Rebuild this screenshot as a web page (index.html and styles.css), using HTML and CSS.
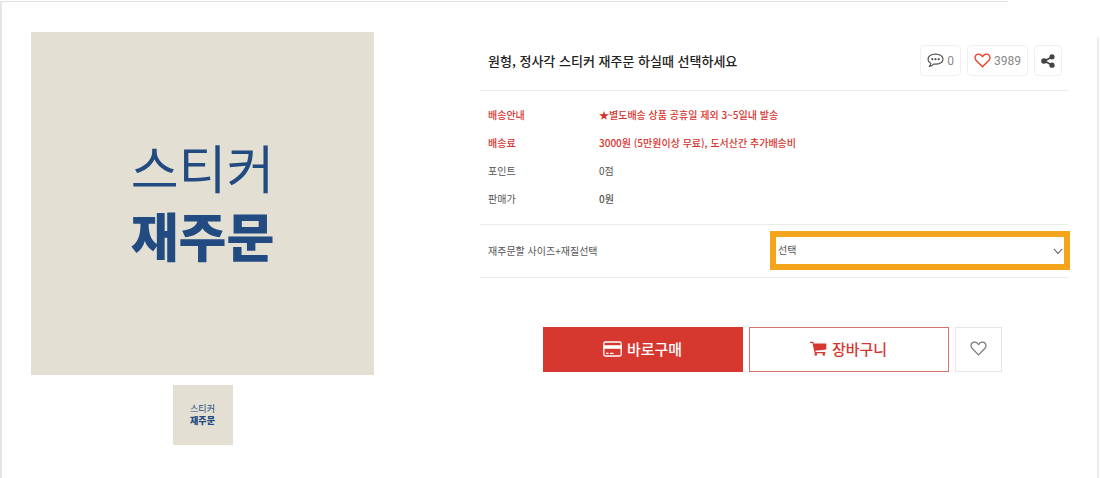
FILE: index.html
```html
<!DOCTYPE html>
<html lang="ko">
<head>
    <meta charset="UTF-8">
    <meta name="viewport" content="width=device-width, initial-scale=1.0">
    <title>스티커 재주문</title>
    <link rel="stylesheet" href="styles.css">
</head>
<body>

    <main class="page">
        <div class="top-rule"></div>

        <div class="product">
            <div class="gallery">
                <div class="photo">
                    <span>스티커</span>
                    <strong>재주문</strong>
                </div>
                <button type="button" class="photo thumb">
                    <span>스티커</span>
                    <strong>재주문</strong>
                </button>
            </div>

            <form class="info">
                <div class="info-head">
                    <h1>원형, 정사각 스티커 재주문 하실때 선택하세요</h1>
                    <div class="badges">
                        <a href="#reviews" class="badge" aria-label="상품평">
                            <svg width="17" height="15" viewBox="0 0 17 15">
                                <path d="M8.500 1.200C4.200 1.200 1 3.300 1 6.200c0 1.700 1.100 3.100 2.800 4-.1 1.200-.7 2.300-1.500 3.100 1.800-.1 3.300-1 4.300-2.200.6.100 1.200.1 1.900.1 4.300 0 7.500-2.100 7.500-5s-3.200-5-7.500-5z" fill="none" stroke="#555" stroke-width="1.200" stroke-linejoin="round"/>
                                <circle cx="5.300" cy="6.200" r="1.100" fill="#555"/>
                                <circle cx="8.500" cy="6.200" r="1.100" fill="#555"/>
                                <circle cx="11.700" cy="6.200" r="1.100" fill="#555"/>
                            </svg>
                            <span>0</span>
                        </a>
                        <button type="button" class="badge" aria-label="좋아요">
                            <svg width="17" height="15" viewBox="0 0 17 15">
                                <path d="M8.500 13.800L2.200 7.500C.6 5.800.7 3.300 2.100 2 3.900.400 6.900.900 8.500 3.700 10.100.900 13.100.400 14.900 2c1.400 1.300 1.500 3.800-.1 5.500z" fill="none" stroke="#e8442e" stroke-width="1.400" stroke-linejoin="round"/>
                            </svg>
                            <span>3989</span>
                        </button>
                        <button type="button" class="badge share" aria-label="공유">
                            <svg width="14" height="14" viewBox="0 0 14 14">
                                <path d="M11 3L3.300 7 11 11" fill="none" stroke="#444" stroke-width="1.800"/>
                                <circle cx="11" cy="2.800" r="2.600" fill="#444"/>
                                <circle cx="3" cy="7" r="2.800" fill="#444"/>
                                <circle cx="11" cy="11.200" r="2.600" fill="#444"/>
                            </svg>
                        </button>
                    </div>
                </div>

                <dl class="details">
                    <dt class="notice">배송안내</dt>
                    <dd class="notice">★별도배송 상품 공휴일 제외 3~5일내 발송</dd>
                    <dt class="notice">배송료</dt>
                    <dd class="notice">3000원 (5만원이상 무료), 도서산간 추가배송비</dd>
                    <dt>포인트</dt>
                    <dd>0점</dd>
                    <dt>판매가</dt>
                    <dd class="price">0원</dd>
                </dl>

                <div class="option">
                    <label for="size">재주문할 사이즈+재질선택</label>
                    <div class="select-box">
                        <select id="size">
                            <option>선택</option>
                        </select>
                        <svg class="chevron" width="10" height="7" viewBox="0 0 10 7">
                            <path d="M1 1l4 4.500L9 1" fill="none" stroke="#555" stroke-width="1.100"/>
                        </svg>
                    </div>
                </div>

                <div class="actions">
                    <button type="submit" class="btn buy">
                        <svg width="19" height="16" viewBox="0 0 19 16">
                            <rect x=".8" y="1" width="17.400" height="14" rx="1.500" fill="none" stroke="#fff" stroke-width="1.300"/>
                            <path d="M1 4.200h17v3.600H1z" fill="#fff"/>
                            <path d="M3 12.300h2.500M7 12.300h3.500" stroke="#fff" stroke-width="1.200"/>
                        </svg>
                        바로구매
                    </button>
                    <button type="button" class="btn cart">
                        <svg width="17" height="15" viewBox="0 0 17 15">
                            <path d="M0 .8h3.300l.4 1.600H16.300v6L5.400 9.700l.3 1.300h9.500v1.200H4.700L2.400 2H0z" fill="#d63830"/>
                            <circle cx="5.800" cy="13.400" r="1.300" fill="#d63830"/>
                            <circle cx="13.800" cy="13.400" r="1.300" fill="#d63830"/>
                        </svg>
                        장바구니
                    </button>
                    <button type="button" class="btn wish" aria-label="찜하기">
                        <svg width="17" height="15" viewBox="0 0 17 15">
                            <path d="M8.500 13.800L2.200 7.500C.6 5.800.7 3.300 2.100 2 3.900.400 6.900.900 8.500 3.700 10.100.900 13.100.400 14.900 2c1.400 1.300 1.500 3.800-.1 5.500z" fill="none" stroke="#777" stroke-width="1.200" stroke-linejoin="round"/>
                        </svg>
                    </button>
                </div>
            </form>
        </div>
    </main>

</body>
</html>
```
FILE: styles.css
```css
* {
    box-sizing: border-box;
}

body {
    margin: 0;
    padding: 1px 1px 0 0;
    background: #fff;
    color: #555;
    font-family: "Noto Sans CJK KR", sans-serif;
    font-size: 10px;
}

button,
select {
    font-family: inherit;
    color: inherit;
}

button {
    cursor: pointer;
}

svg {
    flex: none;
}

.page {
    min-height: calc(100vh - 1px);
    display: flex;
    flex-direction: column;
    border-left: 2px solid #e6e6e6;
}

.top-rule {
    height: 1px;
    margin-right: 91px;
    background: #e0e0e0;
}

.product {
    flex: 1;
    display: flex;
    gap: 106px;
    padding-left: 29px;
}

/* gallery */
.gallery {
    flex: 0 1 343px;
    display: flex;
    flex-direction: column;
    align-items: center;
    gap: 10px;
    padding: 30px 0;
}

.photo {
    width: 100%;
    aspect-ratio: 1;
    display: flex;
    flex-direction: column;
    align-items: center;
    justify-content: center;
    padding-bottom: 6px;
    background: #e3dfd3;
    color: #224b82;
    font-size: 52px;
    font-weight: 400;
    line-height: 68px;
}

.photo strong {
    font-weight: 900;
}

.thumb {
    width: 60px;
    padding: 0;
    border: none;
    font-size: 9px;
    line-height: 12px;
}

/* product info */
.info {
    flex: 1;
    margin-top: 35px;
    padding-right: 29px;
    border-right: 2px solid #ececec;
}

.info-head {
    display: flex;
    align-items: center;
    justify-content: space-between;
    padding: 8px 6px 14px 8px;
    border-bottom: 1px solid #ececec;
}

h1 {
    margin: 0;
    color: #222;
    font-size: 13px;
    font-weight: 500;
    line-height: 20px;
}

.badges {
    display: flex;
    gap: 6px;
}

.badge {
    height: 31px;
    display: flex;
    align-items: center;
    gap: 3px;
    padding: 0 6px;
    background: #fff;
    border: 1px solid #f0f0f0;
    border-radius: 4px;
    color: #888;
    font-family: Roboto, sans-serif;
    font-size: 12px;
    text-decoration: none;
}

.details {
    display: grid;
    grid-template-columns: 111px 1fr;
    margin: 0;
    padding: 10px 8px 11px;
    border-bottom: 1px solid #ececec;
    line-height: 28px;
}

.details dd {
    margin: 0;
}

.details .notice {
    color: #d8322c;
    font-weight: 500;
}

.details .price {
    font-weight: 500;
}

.option {
    display: flex;
    align-items: center;
    justify-content: space-between;
    padding: 6px 0 7px 8px;
    border-bottom: 1px solid #ececec;
}

.select-box {
    position: relative;
    flex: 0 1 300px;
    margin-right: -2px;
}

.select-box select {
    display: block;
    width: 100%;
    height: 39px;
    padding: 0 20px 2px 2px;
    appearance: none;
    background: #fff;
    border: 6px solid #f4a51c;
    border-radius: 0;
    font-size: 10px;
}

.chevron {
    position: absolute;
    top: 17px;
    right: 7px;
    pointer-events: none;
}

.actions {
    display: flex;
    justify-content: center;
    gap: 6px;
    padding: 49px 4px 0 0;
}

.btn {
    flex: 0 1 200px;
    height: 45px;
    display: flex;
    align-items: center;
    justify-content: center;
    gap: 5px;
    padding: 0 0 2px;
    background: #fff;
    border: 1px solid #d9726e;
    font-size: 15px;
    font-weight: 500;
}

.buy {
    background: #d63830;
    border-color: #d63830;
    color: #fff;
}

.cart {
    color: #d63830;
}

.wish {
    flex-basis: 47px;
    border-color: #e6e6e6;
}
```
